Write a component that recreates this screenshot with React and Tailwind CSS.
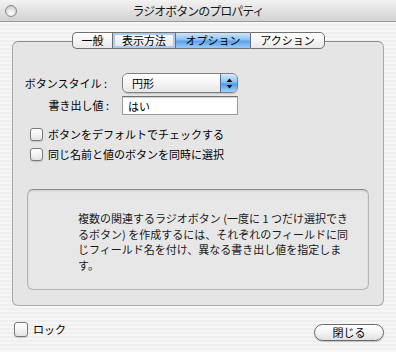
import React from "react";

const stripes =
  "bg-[repeating-linear-gradient(180deg,#efefef_0px,#efefef_2px,#f6f6f6_2px,#f6f6f6_4px)]";

function Check({ label }) {
  return (
    <div className="flex items-center gap-[5px]">
      <div className="w-[13px] h-[13px] rounded-[3px] border border-[#7a7a7a] bg-[linear-gradient(180deg,#ffffff_0%,#f4f4f4_50%,#e2e2e2_100%)] shadow-[0_1px_1px_rgba(0,0,0,0.15)]" />
      <span className="text-[11px] leading-[13px] text-black">{label}</span>
    </div>
  );
}

function Tab({ children, w, state, first, last }) {
  let cls =
    "flex items-center justify-center h-full text-[11px] text-black border-[#707070] border-y ";
  if (first) cls += "rounded-l-[5px] border-l ";
  if (last) cls += "rounded-r-[5px] border-r ";
  if (!first) cls += "border-l ";
  if (state === "sel")
    cls +=
      "bg-[linear-gradient(180deg,#cfe6fb_0%,#8cc1f2_45%,#5aa3ea_55%,#9ccbf6_100%)] border-[#3f5f9a] ";
  else if (state === "focus")
    cls +=
      "bg-[linear-gradient(180deg,#ffffff_0%,#f2f2f2_50%,#e6e6e6_100%)] shadow-[inset_0_0_0_2px_#a8cdf0] ";
  else cls += "bg-[linear-gradient(180deg,#ffffff_0%,#f5f5f5_50%,#e8e8e8_100%)] ";
  return (
    <div className={cls} style={{ width: w }}>
      {children}
    </div>
  );
}

export default function App() {
  return (
    <div
      className={`w-[396px] h-[352px] overflow-hidden ${stripes} flex flex-col`}
      style={{ fontFamily: '"Noto Sans CJK JP", "Noto Sans", sans-serif' }}
    >
      {/* title bar */}
      <div className="h-[22px] relative flex items-center justify-center border-b border-[#9a9a9a] bg-[linear-gradient(180deg,#f2f2f2_0%,#e2e2e2_50%,#d2d2d2_100%)]">
        <div className="absolute left-[5px] top-[5px] w-[12px] h-[12px] rounded-full border border-[#8a8a8a] bg-[radial-gradient(circle_at_50%_70%,#ffffff_0%,#e6e6e6_45%,#b9b9b9_100%)]" />
        <span className="text-[12px] tracking-[-1px] text-[#1a1a1a]">ラジオボタンのプロパティ</span>
      </div>

      <div className="px-[12px] pt-[10px]">
        {/* tabs */}
        <div className="relative z-10 flex justify-center h-[17px]">
          <div className="flex h-full ml-[1px]">
            <Tab w={40} first>
              一般
            </Tab>
            <Tab w={63} state="focus">
              表示方法
            </Tab>
            <Tab w={75} state="sel">
              オプション
            </Tab>
            <Tab w={75} last>
              アクション
            </Tab>
          </div>
        </div>

        {/* panel */}
        <div className="-mt-[8px] h-[265px] rounded-[6px] border border-[#a9a9a9] border-t-[#8e8e8e] bg-[#e5e5e5] flex flex-col pt-[31px]">
          <div className="flex items-center h-[20px]">
            <div className="w-[96px] text-right text-[11px] pr-[2px]">ボタンスタイル :</div>
            <div className="ml-[13px] w-[116px] h-[20px] flex rounded-[6px] border border-[#7f7f7f] overflow-hidden shadow-[0_1px_1px_rgba(0,0,0,0.15)]">
              <div className="flex-1 flex items-center pl-[9px] text-[11px] bg-[linear-gradient(180deg,#ffffff_0%,#f5f5f5_50%,#e6e6e6_100%)]">
                円形
              </div>
              <div className="w-[17px] flex flex-col items-center justify-center border-l border-[#4a6ea8] bg-[linear-gradient(180deg,#d6eafc_0%,#8ec3f3_45%,#4f9deb_55%,#a4d0f7_100%)]">
                <svg width="7" height="11" viewBox="0 0 7 11">
                  <path d="M3.5 0.5 L6.5 4 L0.5 4 Z" fill="#111" />
                  <path d="M3.5 10.5 L6.5 7 L0.5 7 Z" fill="#111" />
                </svg>
              </div>
            </div>
          </div>
          <div className="flex items-center h-[19px] mt-[3px]">
            <div className="w-[96px] text-right text-[11px] pr-[0px]">書き出し値 :</div>
            <div className="ml-[13px] w-[116px] h-[19px] border border-[#9a9a9a] border-t-[#6f6f6f] bg-white shadow-[inset_0_1px_1px_rgba(0,0,0,0.2)] flex items-start pl-[5px] pt-[1px] text-[11px]">
              はい
            </div>
          </div>

          <div className="flex flex-col gap-[7px] mt-[13px] pl-[17px]">
            <Check label="ボタンをデフォルトでチェックする" />
            <Check label="同じ名前と値のボタンを同時に選択" />
          </div>

          {/* info box */}
          <div className="mx-[14px] mt-[28px] h-[101px] rounded-[6px] border border-[#b4b4b4] border-t-[#8a8a8a] bg-[#e7e7e7] shadow-[inset_0_1px_2px_rgba(0,0,0,0.12)] pl-[50px] pr-[16px] pt-[21px]">
            <p className="text-[11px] leading-[15.5px] text-[#1a1a1a]">
              複数の関連するラジオボタン (一度に 1 つだけ選択できるボタン) を作成するには、それぞれのフィールドに同じフィールド名を付け、異なる書き出し値を指定します。
            </p>
          </div>
        </div>
      </div>

      {/* bottom */}
      <div className="flex items-start justify-between pl-[14px] pr-[12px] mt-[15px]">
        <div className="flex items-center gap-[5px]">
          <div className="w-[14px] h-[15px] rounded-[3px] border border-[#7a7a7a] bg-[linear-gradient(180deg,#ffffff_0%,#f4f4f4_50%,#e2e2e2_100%)] shadow-[0_1px_1px_rgba(0,0,0,0.15)]" />
          <span className="text-[11px]">ロック</span>
        </div>
        <div className="mt-[3px] w-[70px] h-[17px] rounded-full border border-[#6a6a6a] bg-[linear-gradient(180deg,#ffffff_0%,#f4f4f4_50%,#e0e0e0_100%)] shadow-[0_1px_1px_rgba(0,0,0,0.2)] flex items-center justify-center text-[11px]">
          閉じる
        </div>
      </div>
    </div>
  );
}
